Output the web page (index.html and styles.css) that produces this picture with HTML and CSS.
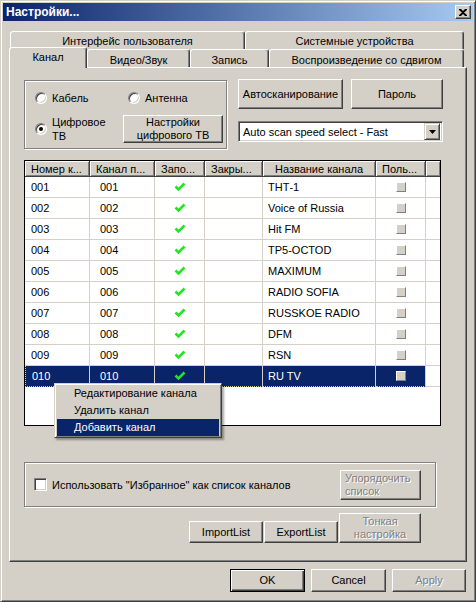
FILE: index.html
```html
<!DOCTYPE html>
<html lang="ru">
<head>
    <meta charset="UTF-8">
    <meta name="viewport" content="width=device-width, initial-scale=1.0">
    <title>Настройки...</title>
    <link rel="stylesheet" href="styles.css">
</head>
<body>
    <div class="window">
        <div class="titlebar">
            <span class="title">Настройки...</span>
            <button class="close-btn">
                <svg width="8" height="7" viewBox="0 0 8 7"><path d="M0 0h2l2 2 2-2h2v1L5 3.5 8 6v1H6L4 5 2 7H0V6l3-2.5L0 1z" fill="#000"/></svg>
            </button>
        </div>

        <div class="tabrow back">
            <div class="tab" style="width: 235px">Интерфейс пользователя</div>
            <div class="tab" style="width: 219px">Системные устройства</div>
        </div>
        <div class="tabrow front">
            <div class="tab on" style="width: 78px">Канал</div>
            <div class="tab" style="width: 103px">Видео/Звук</div>
            <div class="tab" style="width: 79px">Запись</div>
            <div class="tab" style="width: 195px">Воспроизведение со сдвигом</div>
        </div>

        <div class="panel">
            <div class="top">
                <div class="group source">
                    <label class="radio"><span class="dot"></span>Кабель</label>
                    <label class="radio ant"><span class="dot"></span>Антенна</label>
                    <label class="radio"><span class="dot checked"></span><span>Цифровое<br>ТВ</span></label>
                    <button class="btn digital">Настройки<br>цифрового ТВ</button>
                </div>
                <div class="side">
                    <div class="side-btns">
                        <button class="btn scan">Автосканирование</button>
                        <button class="btn pass">Пароль</button>
                    </div>
                    <div class="combo">
                        <span class="combo-text">Auto scan speed select - Fast</span>
                        <span class="combo-arrow">
                            <svg width="7" height="4" viewBox="0 0 7 4"><path d="M0 0h7L3.5 4z" fill="#000"/></svg>
                        </span>
                    </div>
                </div>
            </div>

            <div class="listbox">
                <table class="list">
                    <colgroup>
                        <col style="width: 65px">
                        <col style="width: 65px">
                        <col style="width: 50px">
                        <col style="width: 58px">
                        <col style="width: 113px">
                        <col style="width: 50px">
                        <col>
                    </colgroup>
                    <thead>
                        <tr>
                            <th>Номер к...</th>
                            <th>Канал п...</th>
                            <th>Запо...</th>
                            <th>Закры...</th>
                            <th class="c">Название канала</th>
                            <th>Поль...</th>
                            <th></th>
                        </tr>
                    </thead>
                    <tbody id="rows"></tbody>
                </table>

                <div class="menu">
                    <div class="menu-item">Редактирование канала</div>
                    <div class="menu-item">Удалить канал</div>
                    <div class="menu-item hl">Добавить канал</div>
                </div>
            </div>

            <div class="group favs">
                <label class="check"><span class="box"></span>Использовать "Избранное" как список каналов</label>
                <button class="btn order dis">Упорядочить<br>список</button>
            </div>

            <div class="actions">
                <button class="btn small">ImportList</button>
                <button class="btn small">ExportList</button>
                <button class="btn tune dis">Тонкая<br>настройка</button>
            </div>
        </div>

        <div class="dialog-btns">
            <button class="btn def">OK</button>
            <button class="btn">Cancel</button>
            <button class="btn dis">Apply</button>
        </div>
    </div>

    <script>
        const channels = [
            ['001', 'ТНТ-1'],
            ['002', 'Voice of Russia'],
            ['003', 'Hit FM'],
            ['004', 'TP5-OCTOD'],
            ['005', 'MAXIMUM'],
            ['006', 'RADIO SOFIA'],
            ['007', 'RUSSKOE RADIO'],
            ['008', 'DFM'],
            ['009', 'RSN'],
            ['010', 'RU TV']
        ];
        const selected = '010';

        const tick = '<svg class="tick" width="12" height="10" viewBox="0 0 12 10"><path d="M1.5 4.5 4.5 7.5 10.5 1.5" fill="none" stroke="#22e622" stroke-width="2.6"/></svg>';

        const rows = document.getElementById('rows');
        rows.innerHTML = channels.map(([num, name]) => `
            <tr class="${num === selected ? 'sel' : ''}">
                <td class="n1">${num}</td>
                <td class="n2">${num}</td>
                <td class="c">${tick}</td>
                <td></td>
                <td class="nm">${name}</td>
                <td class="c"><span class="mini"></span></td>
                <td class="filler"></td>
            </tr>
        `).join('');
    </script>
</body>
</html>
```

FILE: styles.css
```css
* {
    margin: 0;
    padding: 0;
    box-sizing: border-box;
}

body {
    background: #d4d0c8;
    font-family: "Liberation Sans", Arial, sans-serif;
    font-size: 11px;
    color: #000;
}

button {
    font-family: inherit;
    font-size: 11px;
    color: #000;
}

.window {
    width: 476px;
    height: 602px;
    background: #d4d0c8;
    border: 1px solid;
    border-color: #d4d0c8 #404040 #404040 #d4d0c8;
    box-shadow: inset 1px 1px #fff, inset -1px -1px #808080;
    padding: 2px;
}

/* title bar */
.titlebar {
    height: 18px;
    display: flex;
    align-items: center;
    justify-content: space-between;
    padding: 0 2px 0 3px;
    background: linear-gradient(to right, #0a246a, #a6caf0);
}

.title {
    color: #fff;
    font-weight: bold;
    font-size: 12px;
}

.close-btn {
    width: 16px;
    height: 14px;
    display: flex;
    align-items: center;
    justify-content: center;
    background: #d4d0c8;
    border: 1px solid;
    border-color: #fff #404040 #404040 #fff;
    box-shadow: inset -1px -1px #808080;
}

/* tabs */
.tabrow {
    display: flex;
    height: 18px;
}

.tabrow.back {
    margin: 10px 0 0 7px;
}

.tabrow.front {
    margin-left: 6px;
    align-items: flex-end;
    position: relative;
    z-index: 1;
}

.tab {
    height: 18px;
    padding-top: 3px;
    text-align: center;
    line-height: 13px;
    background: #d4d0c8;
    border: 1px solid;
    border-bottom: none;
    border-color: #fff #404040 transparent #fff;
    border-radius: 3px 3px 0 0;
    box-shadow: inset -1px 0 #808080;
    white-space: nowrap;
}

.front .tab {
    padding-top: 4px;
}

.front .tab.on {
    height: 21px;
    margin-bottom: -1px;
    padding-top: 3px;
}

/* tab page */
.panel {
    width: 458px;
    height: 495px;
    margin-left: 6px;
    padding: 11px 0 0 14px;
    border: 1px solid;
    border-color: #fff #404040 #404040 #fff;
    box-shadow: inset -1px -1px #808080;
}

.top {
    display: flex;
    gap: 11px;
    height: 70px;
}

.group {
    border: 1px solid #808080;
    box-shadow: inset 1px 1px #fff, 1px 1px #fff;
}

.source {
    width: 203px;
    height: 69px;
    margin-top: 1px;
    padding: 11px 0 0 10px;
    display: grid;
    grid-template-columns: 88px 92px;
    grid-template-rows: 12px 28px;
    row-gap: 11px;
    align-items: center;
}

.radio {
    display: flex;
    align-items: center;
    gap: 5px;
    line-height: 14px;
}

.radio.ant {
    margin-left: 5px;
}

.dot {
    width: 12px;
    height: 12px;
    flex: none;
    border-radius: 50%;
    background: #fff;
    border: 1px solid;
    border-color: #808080 #fff #fff #808080;
    box-shadow: inset 1px 1px #404040, inset -1px -1px #d4d0c8;
    display: flex;
    align-items: center;
    justify-content: center;
}

.dot.checked::after {
    content: "";
    width: 4px;
    height: 4px;
    border-radius: 50%;
    background: #000;
}

.btn {
    background: #d4d0c8;
    border: 1px solid;
    border-color: #fff #404040 #404040 #fff;
    box-shadow: inset -1px -1px #808080;
    line-height: 13px;
    text-align: center;
}

.btn.digital {
    width: 100px;
    height: 28px;
}

.side {
    width: 205px;
}

.side-btns {
    display: flex;
    gap: 8px;
}

.btn.scan {
    width: 105px;
    height: 30px;
}

.btn.pass {
    width: 92px;
    height: 30px;
}

.combo {
    margin-top: 12px;
    height: 21px;
    display: flex;
    align-items: center;
    justify-content: space-between;
    background: #fff;
    border: 1px solid;
    border-color: #808080 #fff #fff #808080;
    box-shadow: inset 1px 1px #404040, inset -1px -1px #d4d0c8;
    padding: 0 2px 0 4px;
}

.combo-arrow {
    width: 16px;
    height: 17px;
    display: flex;
    align-items: center;
    justify-content: center;
    background: #d4d0c8;
    border: 1px solid;
    border-color: #d4d0c8 #404040 #404040 #d4d0c8;
    box-shadow: inset 1px 1px #fff, inset -1px -1px #808080;
}

/* channel list */
.listbox {
    position: relative;
    width: 417px;
    height: 266px;
    margin-top: 11px;
    background: #fff;
    border: 1px solid #000;
}

.list {
    width: 100%;
    table-layout: fixed;
    border-collapse: separate;
    border-spacing: 0;
}

.list th {
    height: 16px;
    font-weight: normal;
    text-align: left;
    padding-left: 6px;
    background: #d4d0c8;
    border-right: 1px solid #404040;
    border-bottom: 1px solid #404040;
    box-shadow: inset 1px 1px #fff, inset -1px -1px #808080;
    white-space: nowrap;
    overflow: hidden;
}

.list th:last-child {
    border-right: none;
}

.list th.c {
    text-align: center;
    padding-left: 0;
}

.list td {
    height: 21px;
    border-right: 1px solid #d4d0c8;
    border-bottom: 1px solid #d4d0c8;
    white-space: nowrap;
    overflow: hidden;
}

.list td.n1 {
    padding-left: 6px;
}

.list td.n2 {
    padding-left: 10px;
}

.list td.nm {
    padding-left: 5px;
}

.list td.c {
    text-align: center;
}

.list td.filler {
    border-right: none;
}

.tick {
    display: block;
    margin: 0 auto;
}

.mini {
    display: block;
    width: 10px;
    height: 10px;
    margin: 0 auto;
    background: #d4d0c8;
    border: 1px solid;
    border-color: #fff #808080 #808080 #fff;
}

.list tr.sel td:not(.filler) {
    background: #0a246a;
    color: #fff;
    border-bottom: 1px dotted #c8c8a0;
}

.list tr.sel td:first-child {
    border-left: 1px dotted #c8c8a0;
}

/* context menu */
.menu {
    position: absolute;
    left: 29px;
    top: 222px;
    width: 168px;
    padding: 1px;
    background: #d4d0c8;
    border: 1px solid;
    border-color: #d4d0c8 #404040 #404040 #d4d0c8;
    box-shadow: inset 1px 1px #fff, inset -1px -1px #808080, 2px 2px 2px rgba(0,0,0,0.35);
}

.menu-item {
    height: 17px;
    line-height: 17px;
    padding-left: 17px;
    margin: 0 1px;
}

.menu-item.hl {
    background: #0a246a;
    color: #fff;
}

/* favourites */
.favs {
    width: 412px;
    height: 45px;
    margin-top: 36px;
    padding: 0 14px 0 9px;
    display: flex;
    align-items: center;
    justify-content: space-between;
}

.check {
    display: flex;
    align-items: center;
    gap: 5px;
}

.box {
    width: 13px;
    height: 13px;
    background: #fff;
    border: 1px solid;
    border-color: #808080 #fff #fff #808080;
    box-shadow: inset 1px 1px #404040, inset -1px -1px #d4d0c8;
}

.btn.order {
    width: 81px;
    height: 30px;
    text-align: left;
    padding-left: 4px;
}

.dis {
    color: #808080;
    text-shadow: 1px 1px 0 #fff;
}

.actions {
    width: 397px;
    margin-top: 6px;
    display: flex;
    justify-content: flex-end;
    align-items: flex-end;
    gap: 1px;
}

.btn.small {
    width: 74px;
    height: 22px;
}

.btn.tune {
    width: 82px;
    height: 30px;
}

/* dialog buttons */
.dialog-btns {
    display: flex;
    justify-content: flex-end;
    gap: 6px;
    margin-top: 7px;
    padding-right: 7px;
}

.dialog-btns .btn {
    width: 75px;
    height: 23px;
}

.dialog-btns .btn:last-child {
    width: 74px;
}

.btn.def {
    border-color: #000;
    box-shadow: inset 1px 1px #fff, inset -1px -1px #404040, inset -2px -2px #808080;
}
```
